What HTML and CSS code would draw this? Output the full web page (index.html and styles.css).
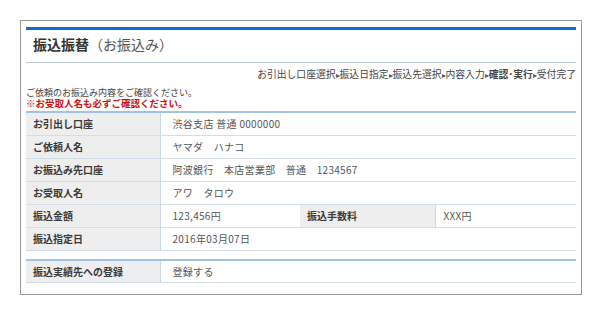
FILE: index.html
```html
<!DOCTYPE html>
<html lang="ja">
<head>
  <meta charset="UTF-8">
  <title>振込振替（お振込み）</title>
  <link rel="stylesheet" href="styles.css">
</head>
<body>
  <div class="box">
    <h1 class="title"><b>振込振替</b>（お振込み）</h1>

    <p class="steps">お引出し口座選択<span class="arrow">▸</span>振込日指定<span class="arrow">▸</span>振込先選択<span class="arrow">▸</span>内容入力<span class="arrow">▸</span><b>確認･実行</b><span class="arrow">▸</span>受付完了</p>

    <div class="intro">
      <p>ご依頼のお振込み内容をご確認ください。</p>
      <p class="warn">※お受取人名も必ずご確認ください。</p>
    </div>

    <table class="detail">
      <colgroup>
        <col class="col-label">
        <col class="col-value">
        <col class="col-label2">
        <col>
      </colgroup>
      <tr>
        <th>お引出し口座</th>
        <td colspan="3">渋谷支店 普通 0000000</td>
      </tr>
      <tr>
        <th>ご依頼人名</th>
        <td colspan="3">ヤマダ　ハナコ</td>
      </tr>
      <tr>
        <th>お振込み先口座</th>
        <td colspan="3">阿波銀行　本店営業部　普通　1234567</td>
      </tr>
      <tr>
        <th>お受取人名</th>
        <td colspan="3">アワ　タロウ</td>
      </tr>
      <tr>
        <th>振込金額</th>
        <td>123,456円</td>
        <th>振込手数料</th>
        <td class="fee">XXX円</td>
      </tr>
      <tr>
        <th>振込指定日</th>
        <td colspan="3">2016年03月07日</td>
      </tr>
    </table>

    <table class="detail register">
      <colgroup>
        <col class="col-label">
        <col>
      </colgroup>
      <tr>
        <th>振込実績先への登録</th>
        <td>登録する</td>
      </tr>
    </table>
  </div>
</body>
</html>
```

FILE: styles.css
```css
* {
  box-sizing: border-box;
}

body {
  margin: 0;
  font-family: "Noto Sans CJK JP", "Noto Sans", sans-serif;
  background-color: #fff;
  color: #333;
}

.box {
  width: 562px;
  height: 275px;
  margin: 20px 20px 0;
  padding: 6px 5px 0;
  border: 1px solid #9a9a9a;
}

.title {
  margin: 0;
  height: 36px;
  padding-left: 7px;
  border-top: 3px solid #0a6fd0;
  border-bottom: 1px solid #b9c9da;
  font-size: 14px;
  line-height: 29px;
  font-weight: normal;
  color: #555;
}

.title b {
  color: #333;
}

.steps {
  margin: 4px 0 0;
  font-size: 9.8px;
  line-height: 14px;
  text-align: right;
  color: #444;
}

.steps .arrow {
  font-size: 8px;
  color: #555;
}

.intro {
  margin-top: 6px;
  font-size: 9px;
  line-height: 10px;
  color: #444;
}

.intro p {
  margin: 0;
}

.intro .warn {
  font-size: 9.5px;
  color: #cc1111;
  font-weight: bold;
}

.detail {
  width: 100%;
  margin-top: 3px;
  border-collapse: collapse;
  border-top: 2px solid #a3c1e2;
  table-layout: fixed;
}

.col-label {
  width: 134px;
}

.col-value {
  width: 140px;
}

.col-label2 {
  width: 135px;
}

.detail th,
.detail td {
  height: 23px;
  padding: 0 0 0 7px;
  border-bottom: 1px solid #d3dde8;
  font-size: 10px;
  text-align: left;
  vertical-align: middle;
}

.detail th {
  background-color: #eeeeee;
  color: #3a3a3a;
  font-weight: bold;
  border-right: 1px solid #c9d7e7;
}

.detail td {
  padding-left: 12px;
  color: #555;
  letter-spacing: 0.3px;
}

.detail td.fee {
  padding-left: 8px;
}

.register {
  margin-top: 8px;
}
```
